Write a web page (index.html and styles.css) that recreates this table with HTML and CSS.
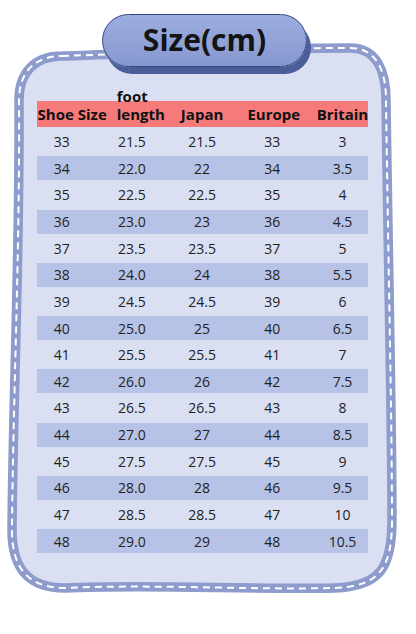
FILE: index.html
```html
<!DOCTYPE html>
<html lang="en">
<head>
  <meta charset="UTF-8">
  <title>Size chart</title>
  <link rel="stylesheet" href="styles.css">
</head>
<body>
  <div class="sheet">
    <svg class="card_bg" width="416" height="634" viewBox="0 0 416 634">
      <path class="card_edge" d="M 62 56 C 150 53, 250 48, 350 48 C 376 48, 386 70, 386 100 C 388 250, 392 420, 392 520 C 392 568, 380 586, 335 588 C 250 590, 150 584, 65 588 C 26 588, 12 566, 12 530 C 13 400, 20 250, 19 100 C 19 72, 35 56, 62 56 Z"/>
      <path class="card_stitch" d="M 62 56 C 150 53, 250 48, 350 48 C 376 48, 386 70, 386 100 C 388 250, 392 420, 392 520 C 392 568, 380 586, 335 588 C 250 590, 150 584, 65 588 C 26 588, 12 566, 12 530 C 13 400, 20 250, 19 100 C 19 72, 35 56, 62 56 Z"/>
    </svg>

    <h1 class="title">Size(cm)</h1>

    <div class="chart">
      <div class="head">
        <span class="c_size">Shoe Size</span>
        <span class="c_foot">foot<br>length</span>
        <span>Japan</span>
        <span class="c_eu">Europe</span>
        <span>Britain</span>
      </div>
      <div class="row"><span>33</span><span>21.5</span><span>21.5</span><span>33</span><span>3</span></div>
      <div class="row"><span>34</span><span>22.0</span><span>22</span><span>34</span><span>3.5</span></div>
      <div class="row"><span>35</span><span>22.5</span><span>22.5</span><span>35</span><span>4</span></div>
      <div class="row"><span>36</span><span>23.0</span><span>23</span><span>36</span><span>4.5</span></div>
      <div class="row"><span>37</span><span>23.5</span><span>23.5</span><span>37</span><span>5</span></div>
      <div class="row"><span>38</span><span>24.0</span><span>24</span><span>38</span><span>5.5</span></div>
      <div class="row"><span>39</span><span>24.5</span><span>24.5</span><span>39</span><span>6</span></div>
      <div class="row"><span>40</span><span>25.0</span><span>25</span><span>40</span><span>6.5</span></div>
      <div class="row"><span>41</span><span>25.5</span><span>25.5</span><span>41</span><span>7</span></div>
      <div class="row"><span>42</span><span>26.0</span><span>26</span><span>42</span><span>7.5</span></div>
      <div class="row"><span>43</span><span>26.5</span><span>26.5</span><span>43</span><span>8</span></div>
      <div class="row"><span>44</span><span>27.0</span><span>27</span><span>44</span><span>8.5</span></div>
      <div class="row"><span>45</span><span>27.5</span><span>27.5</span><span>45</span><span>9</span></div>
      <div class="row"><span>46</span><span>28.0</span><span>28</span><span>46</span><span>9.5</span></div>
      <div class="row"><span>47</span><span>28.5</span><span>28.5</span><span>47</span><span>10</span></div>
      <div class="row"><span>48</span><span>29.0</span><span>29</span><span>48</span><span>10.5</span></div>
    </div>
  </div>
</body>
</html>
```

FILE: styles.css
```css
body{
  margin: 0;
  padding: 0;
  background: #fff;
  font-family: "Open Sans", "Noto Sans", sans-serif;
}
.sheet{
  position: relative;
  width: 416px;
  height: 634px;
  overflow: hidden;
}
.card_bg{
  position: absolute;
  left: 0;
  top: 0;
}
.card_edge{
  fill: #dae0f1;
  stroke: #8d9bcd;
  stroke-width: 9.5;
}
.card_stitch{
  fill: none;
  stroke: #fff;
  stroke-width: 2;
  stroke-dasharray: 7 5;
}
.title{
  position: relative;
  box-sizing: border-box;
  width: 205px;
  height: 53px;
  margin: 14px 0 0 102px;
  border: 1.5px solid #33467a;
  border-radius: 27px;
  background: linear-gradient(#9caede, #8698d0);
  box-shadow: 4px 7px 0 #4a5e99;
  font-size: 30px;
  font-weight: 700;
  line-height: 50px;
  text-align: center;
  color: #141414;
}
.chart{
  position: relative;
  width: 351px;
  margin: 20px 0 0 26.6px;
  display: flex;
  flex-direction: column;
  gap: 2.64px;
}
.head,
.row{
  display: grid;
  grid-template-columns: repeat(5, minmax(0, 1fr));
  justify-items: center;
}
.head{
  box-sizing: border-box;
  height: 40px;
  padding-bottom: 4px;
  align-items: end;
  font-size: 15px;
  font-weight: 700;
  line-height: 18px;
  color: #111;
  background: linear-gradient(#f57a79, #f57a79) center bottom / 331px 26px no-repeat;
}
.head span{
  white-space: nowrap;
}
.head .c_size{
  justify-self: start;
  padding-left: 11px;
}
.head .c_foot{
  justify-self: start;
  padding-left: 20px;
}
.head .c_eu{
  padding-left: 3px;
}
.row{
  height: 24px;
  align-items: center;
  font-size: 14px;
  color: #222;
}
.row:nth-child(odd){
  background: linear-gradient(#b7c2e7, #b7c2e7) center / 331px 100% no-repeat;
}
```
